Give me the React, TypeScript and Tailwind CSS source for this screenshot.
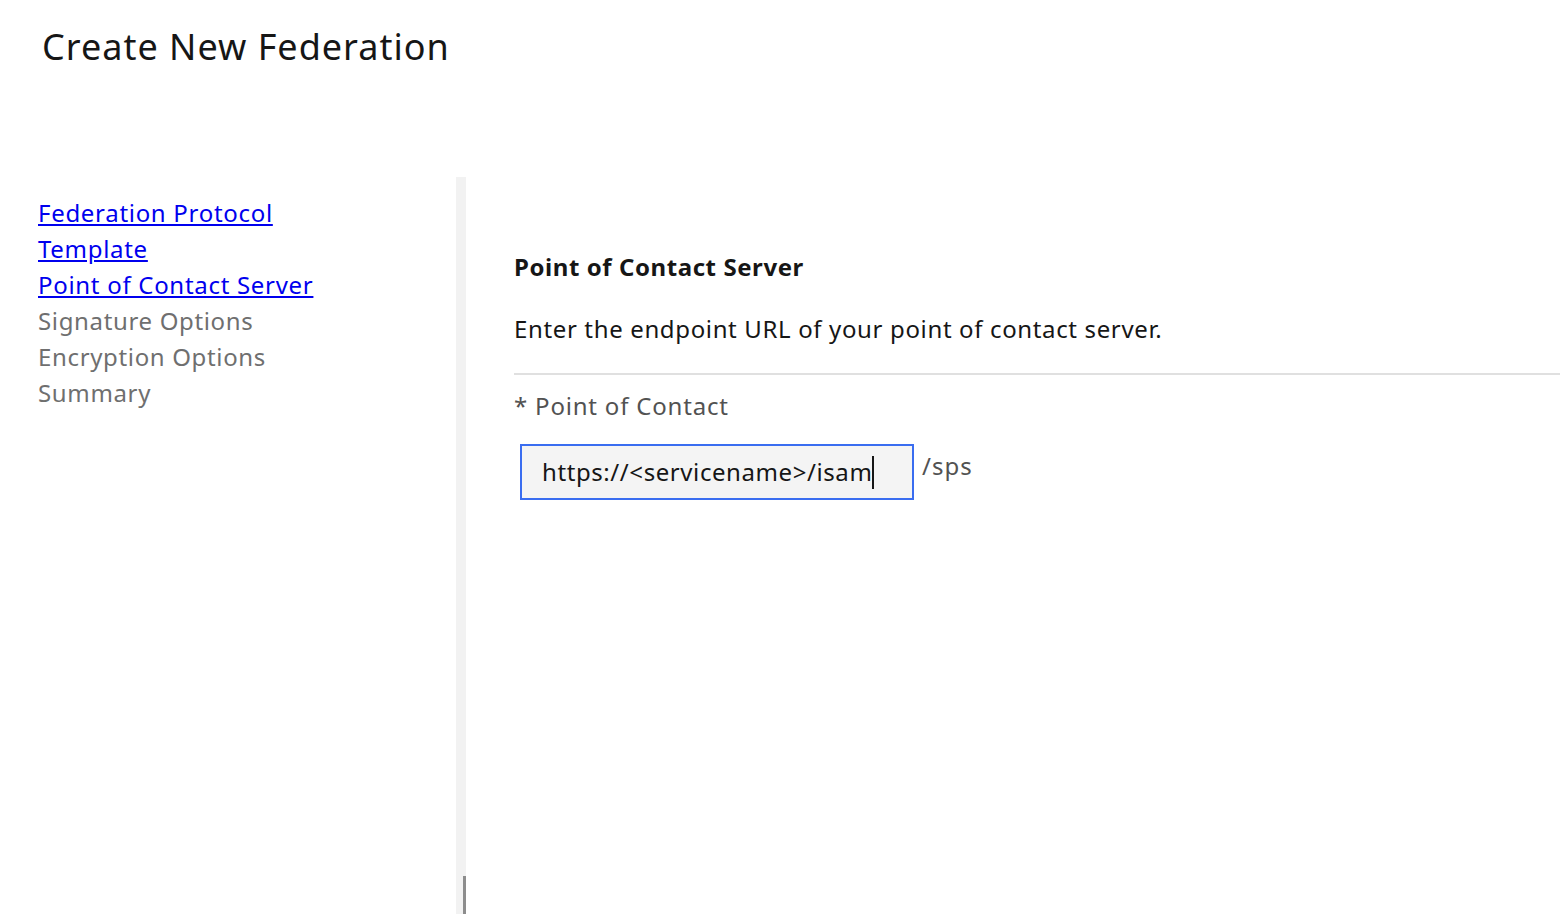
import React from "react";

export default function App() {
  const links = ["Federation Protocol", "Template", "Point of Contact Server"];
  const disabled = ["Signature Options", "Encryption Options", "Summary"];
  return (
    <div className="h-[914px] w-full bg-white flex flex-col overflow-hidden font-['Noto_Sans',sans-serif]">
      <div className="h-[177px] shrink-0 pl-[42px] pt-[22px]">
        <h1 className="text-[36px] leading-[50px] font-normal text-[#161616] tracking-[1px]">Create New Federation</h1>
      </div>
      <div className="flex flex-1 min-h-0">
        <nav className="w-[456px] shrink-0 pl-[38px] pt-[18px] flex flex-col">
          {links.map((l) => (
            <a key={l} href="#" className="text-[24px] leading-[36px] text-[#0000ee] underline w-fit tracking-[0.7px]">
              {l}
            </a>
          ))}
          {disabled.map((l) => (
            <span key={l} className="text-[24px] leading-[36px] text-[#6f6f6f] tracking-[0.65px]">
              {l}
            </span>
          ))}
        </nav>
        <div className="w-[10px] shrink-0 bg-[#f2f2f2] flex flex-col justify-end">
          <div className="ml-[7px] w-[3px] h-[38px] bg-[#8d8d8d]" />
        </div>
        <main className="flex-1 pl-[48px] pt-[72px] flex flex-col">
          <h2 className="text-[24px] leading-[36px] font-bold text-[#161616] tracking-[0.57px]">Point of Contact Server</h2>
          <p className="mt-[26px] text-[24px] leading-[36px] text-[#161616] tracking-[0.64px]">
            Enter the endpoint URL of your point of contact server.
          </p>
          <div className="mt-[26px] h-[2px] bg-[#e0e0e0]" />
          <label className="mt-[13px] text-[24px] leading-[36px] text-[#525252] tracking-[0.8px]">* Point of Contact</label>
          <div className="mt-[20px] ml-[6px] flex items-start gap-[8px]">
            <div className="w-[394px] h-[56px] border-2 border-[#3a6df0] bg-[#f4f4f4] pl-[20px] flex items-center">
              <span className="text-[24px] leading-[36px] text-[#161616] tracking-[0.58px]">https://&lt;servicename&gt;/isam</span>
              <span className="w-[2px] h-[33px] bg-[#161616]" />
            </div>
            <span className="mt-[4px] text-[24px] leading-[36px] text-[#525252] tracking-[1px]">/sps</span>
          </div>
        </main>
      </div>
    </div>
  );
}
